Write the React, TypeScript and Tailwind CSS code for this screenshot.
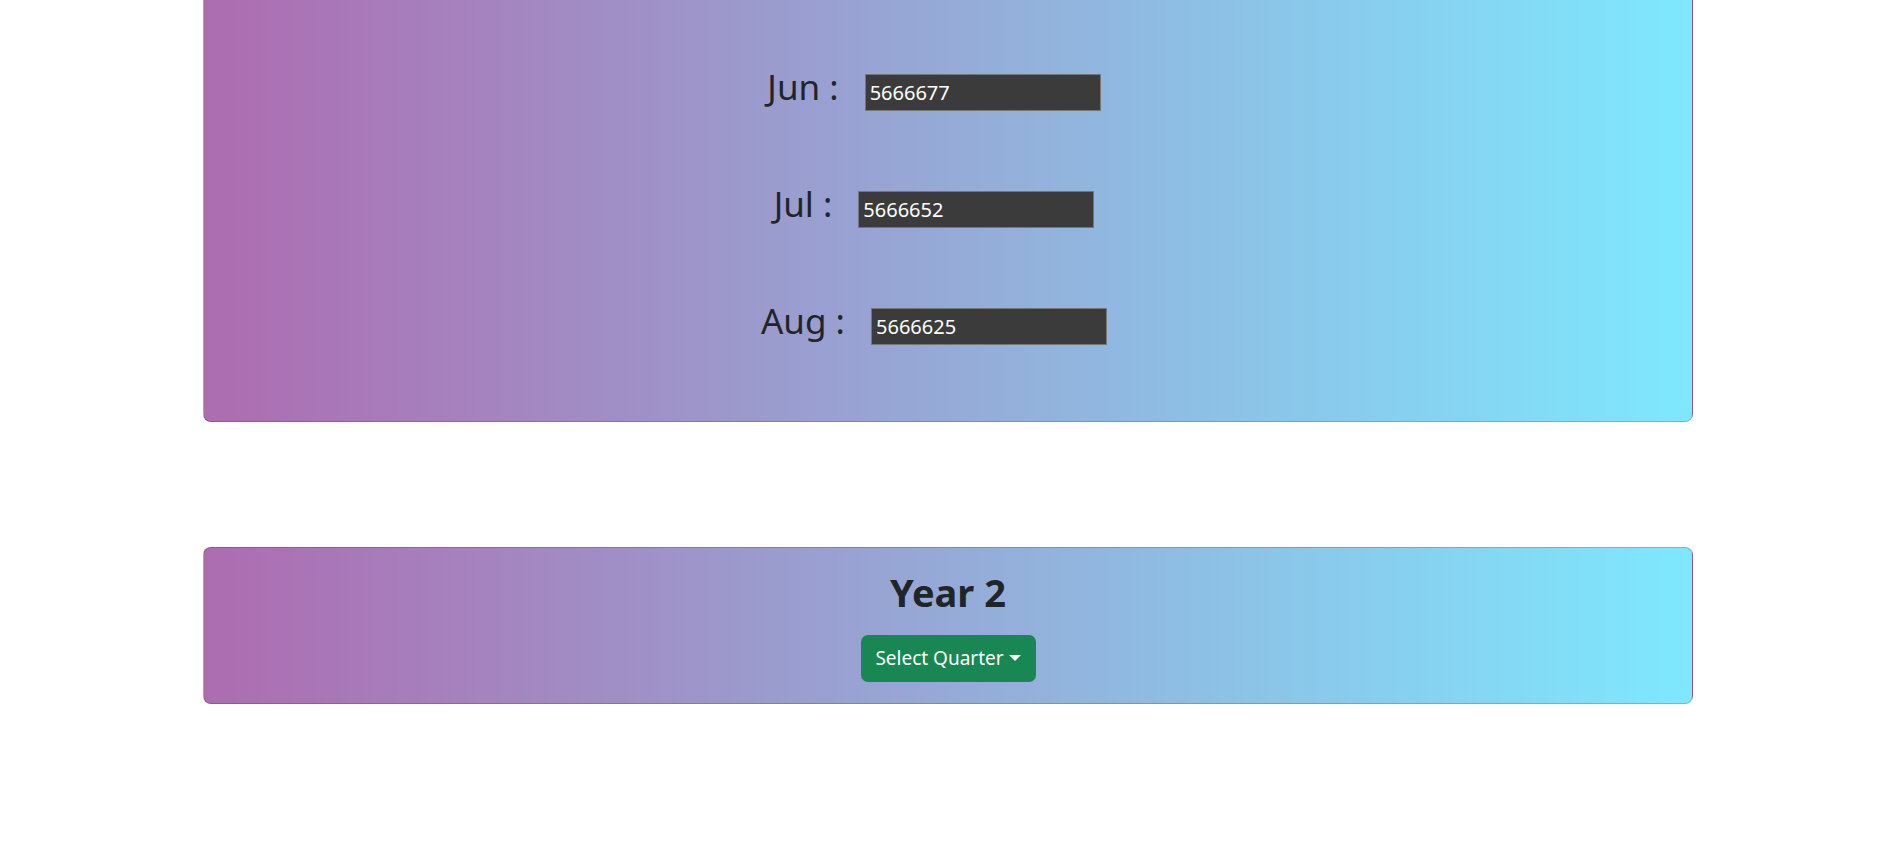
import React from "react";

const rows = [
  { label: "Jun :", value: "5666677" },
  { label: "Jul :", value: "5666652" },
  { label: "Aug :", value: "5666625" },
];

const panelBg =
  "bg-linear-to-r/srgb from-[#ad6cb0] to-[#7ee8fe] border border-black/[0.175]";

export default function App() {
  return (
    <div
      className="w-full h-[856px] overflow-hidden bg-white text-[#212529]"
      style={{ fontFamily: '"Noto Sans", "Open Sans", sans-serif' }}
    >
      <div className="ml-[203px] w-[1490px] flex flex-col">
        <div className={`${panelBg} border-t-0 rounded-b-[8px] pt-[30px] pb-[40px] flex flex-col`}>
          {rows.map((r) => (
            <div key={r.label} className="h-[117px] flex items-center justify-center">
              <div className="flex items-baseline gap-[26px] mr-[28px]">
                <span className="text-[35px] leading-[1.2]">{r.label}</span>
                <input
                  readOnly
                  value={r.value}
                  className="w-[236px] h-[37px] bg-[#3b3b3b] border border-[#767676] text-white text-[20px] px-[4px] outline-none"
                />
              </div>
            </div>
          ))}
        </div>

        <div className={`${panelBg} mt-[125px] rounded-[8px] h-[157px] flex flex-col items-center pt-[22px]`}>
          <h2 className="text-[38px] font-bold leading-[1.2] mb-[19px]">Year 2</h2>
          <button className="w-[175px] h-[47px] rounded-[7px] bg-[#198754] text-white text-[19px] flex items-center justify-center">
            <span>Select Quarter</span>
            <span className="ml-[5px] w-0 h-0 border-l-[6px] border-r-[6px] border-t-[6px] border-l-transparent border-r-transparent border-t-white" />
          </button>
        </div>
      </div>
    </div>
  );
}
